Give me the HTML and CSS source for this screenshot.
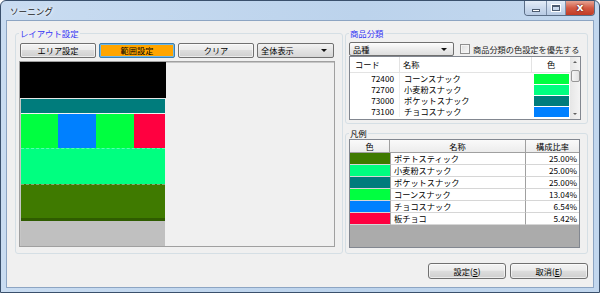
FILE: index.html
```html
<!DOCTYPE html>
<html lang="ja">
<head>
  <meta charset="UTF-8"/>
  <title>ソーニング</title>
  <link rel="stylesheet" href="styles.css">
</head>
<body>
  <div class="window">
    <div class="titlebar">
      <span class="title">ソーニング</span>
      <div class="caption">
        <span class="cap-btn cap-min"><i></i></span>
        <span class="cap-btn cap-max"><i></i></span>
        <span class="cap-btn cap-close">x</span>
      </div>
    </div>

    <div class="client">
      <div class="main">
        <fieldset class="group group-layout">
          <legend class="blue">レイアウト設定</legend>
          <div class="toolbar">
            <button class="btn">エリア設定</button>
            <button class="btn btn-active">範囲設定</button>
            <button class="btn">クリア</button>
            <div class="combo combo-view"><span>全体表示</span><i class="arrow"></i></div>
          </div>
          <div class="canvas">
            <div class="zones">
              <div class="zone z-black"></div>
              <div class="zone z-teal"></div>
              <div class="zone z-row">
                <div class="cell c-green w37"></div>
                <div class="cell c-blue w38"></div>
                <div class="cell c-green w38"></div>
                <div class="cell c-red w31"></div>
              </div>
              <div class="zone z-mint"></div>
              <div class="zone z-olive"></div>
              <div class="zone z-gray"></div>
            </div>
          </div>
        </fieldset>

        <div class="side">
          <fieldset class="group group-cat">
            <legend class="blue">商品分類</legend>
            <div class="cat-row">
              <div class="combo combo-cat"><span>品種</span><i class="arrow"></i></div>
              <label class="check"><i class="box"></i>商品分類の色設定を優先する</label>
            </div>
            <div class="list">
              <div class="list-grid">
                <div class="lh lh-code">コード</div>
                <div class="lh lh-name">名称</div>
                <div class="lh lh-color">色</div>

                <div class="lc code">72400</div><div class="lc name">コーンスナック</div><div class="lc sw"><i class="c-green"></i></div>
                <div class="lc code">72700</div><div class="lc name">小麦粉スナック</div><div class="lc sw"><i class="c-mint"></i></div>
                <div class="lc code">73000</div><div class="lc name">ポケットスナック</div><div class="lc sw"><i class="c-teal"></i></div>
                <div class="lc code">73100</div><div class="lc name">チョコスナック</div><div class="lc sw"><i class="c-blue"></i></div>
              </div>
              <div class="vscroll">
                <span class="sb-arrow up"></span>
                <span class="sb-thumb"></span>
                <span class="sb-arrow down"></span>
              </div>
            </div>
          </fieldset>

          <fieldset class="group group-legend">
            <legend>凡例</legend>
            <div class="legend-table">
              <div class="lg-grid">
                <div class="gh">色</div>
                <div class="gh">名称</div>
                <div class="gh">構成比率</div>

                <div class="gc c-olive"></div><div class="gc gname">ポテトスティック</div><div class="gc gpct">25.00%</div>
                <div class="gc c-mint"></div><div class="gc gname">小麦粉スナック</div><div class="gc gpct">25.00%</div>
                <div class="gc c-teal"></div><div class="gc gname">ポケットスナック</div><div class="gc gpct">25.00%</div>
                <div class="gc c-green"></div><div class="gc gname">コーンスナック</div><div class="gc gpct">13.04%</div>
                <div class="gc c-blue"></div><div class="gc gname">チョコスナック</div><div class="gc gpct">6.54%</div>
                <div class="gc c-red"></div><div class="gc gname">板チョコ</div><div class="gc gpct">5.42%</div>
              </div>
              <div class="lg-empty"></div>
            </div>
          </fieldset>
        </div>
      </div>

      <div class="footer">
        <button class="btn btn-dlg">設定(<u>S</u>)</button>
        <button class="btn btn-dlg">取消(<u>E</u>)</button>
      </div>
    </div>
  </div>
</body>
</html>
```

FILE: styles.css
```css
* { box-sizing:border-box; }
body { margin:0; font-family:"Noto Sans CJK JP","Noto Sans",sans-serif; font-size:8.2px; color:#000; background:#fff; }

/* window frame */
.window { width:600px; height:293px; display:flex; flex-direction:column; background:linear-gradient(90deg,#c9dcf1,#bcd3ec 60%,#c2d7ee); border:1px solid #3a506c; border-radius:6px 6px 0 0; padding:0 5px 4px; }
.titlebar { height:19px; flex:none; display:flex; justify-content:space-between; align-items:flex-start; }
.title { font-size:8.6px; line-height:20px; padding-left:4px; color:#1c1c1c; text-shadow:0 0 3px #fff,0 0 5px #fff; }
.caption { display:flex; border:1px solid #5a6d86; border-top:none; border-radius:0 0 4px 4px; overflow:hidden; margin-right:-1px; }
.cap-btn { height:14px; display:flex; align-items:center; justify-content:center; }
.cap-min, .cap-max { background:linear-gradient(#e4edf8,#cbdaed 50%,#b8cbe4); border-right:1px solid #7b8ea8; }
.cap-min { width:22px; }
.cap-max { width:19px; }
.cap-min i { width:8px; height:3px; background:#fff; border:1px solid #4c5b70; margin-top:5px; }
.cap-max i { width:8px; height:6px; background:transparent; border:1px solid #4c5b70; box-shadow:inset 0 1px 0 #4c5b70,0 0 0 1px #fff; }
.cap-close { width:28px; background:linear-gradient(#e7a493,#d35a43 50%,#c13b25); color:#fff; font:bold 11px/1 "DejaVu Sans",sans-serif; text-shadow:0 0 2px #5a1010,0 0 1px #5a1010; padding-bottom:2px; }

.client { flex:1; background:#f0f0f0; border:1px solid #8da5c3; padding:6px 5px 0 8px; display:flex; flex-direction:column; }
.main { display:flex; gap:2px; }

/* group boxes */
.group { margin:0; border:1px solid #d5dfe5; border-radius:3px; padding:0 3px; min-width:0; }
.group legend { padding:0 1px; line-height:12px; font-size:8.4px; margin-left:0; }
.blue { color:#3535f5; }
.group-layout { width:328px; height:227px; padding-left:4px; }
.group-layout legend { margin-left:-1px; }
.side { width:243px; display:flex; flex-direction:column; gap:3px; }
.group-cat { height:97px; }
.group-legend { height:127px; }

/* buttons */
.toolbar { display:flex; gap:3px; margin-top:4px; height:15px; }
.btn { width:76px; height:15px; padding:0; font-family:inherit; font-size:8.2px; line-height:13px; color:#000; border:1px solid #707070; border-radius:2px; background:linear-gradient(#f3f3f3 0,#ebebeb 45%,#dddddd 50%,#cfcfcf 100%); box-shadow:inset 0 0 0 1px rgba(255,255,255,.6); }
.btn-active { background:#ffa500; border-color:#3c7fb1; box-shadow:inset 0 0 0 1px #6fb7e8; }
.combo { position:relative; height:15px; border:1px solid #707070; border-radius:2px; background:linear-gradient(#f3f3f3,#e3e3e3 50%,#d6d6d6); line-height:13px; padding-left:3px; }
.combo-view { width:77px; }
.combo-cat { width:105px; height:14px; line-height:12px; background:linear-gradient(#fdfdfd,#ececec 50%,#dedede); }
.arrow { position:absolute; right:6px; top:5px; width:0; height:0; border-left:3px solid transparent; border-right:3px solid transparent; border-top:3px solid #111; }

/* layout canvas */
.canvas { margin:3px 0 0 -1px; width:316px; height:186px; background:#f0f0f0; border:1px solid #a0a0a0; box-shadow:inset 1px 1px 0 #c6c6c6; }
.zones { width:146px; display:flex; flex-direction:column; }
.zone { margin-left:1px; width:144px; }
.z-black { margin-left:0; width:146px; height:37px; background:#000; border-bottom:1px solid #e6e6e6; }
.z-teal { height:14px; background:#007c7c; }
.z-row { height:35px; display:flex; border-top:1px dashed rgba(255,255,255,.3); }
.cell { height:100%; }
.w37 { width:37px; } .w38 { width:38px; } .w31 { width:31px; }
.z-mint { height:36px; background:#00ff80; border-top:1px dashed rgba(255,255,255,.35); }
.z-olive { height:37px; background:#3f7a00; border-top:1px dashed rgba(190,190,190,.6); border-bottom:3px solid #2f5c00; }
.z-gray { height:25px; background:#c0c0c0; }

.c-green { background:#00ff40; }
.c-blue { background:#0080ff; }
.c-red { background:#ff0040; }
.c-mint { background:#00ff80; }
.c-teal { background:#007c7c; }
.c-olive { background:#3f7a00; }

/* category list */
.cat-row { display:flex; align-items:center; margin-top:3px; height:14px; }
.check { display:flex; align-items:center; margin-left:6px; color:#222; }
.box { width:10px; height:10px; border:1px solid #8f8f8f; background:linear-gradient(135deg,#dcdcdc,#f9f9f9); box-shadow:inset 0 0 0 1px #f4f4f4; margin-right:3px; }
.list { display:flex; width:232px; height:64px; border:1px solid #828790; background:#fff; }
.list-grid { flex:1; display:grid; grid-template-columns:50px 132px 38px; grid-template-rows:16px repeat(4,11px); align-content:start; overflow:hidden; }
.lh { border-bottom:1px solid #e3e3e3; border-right:1px solid #e3e3e3; line-height:15px; }
.lh-code { padding-left:5px; }
.lh-name { padding-left:3px; }
.lh-color { text-align:center; border-right:none; }
.lc { line-height:11px; white-space:nowrap; }
.code { text-align:right; padding-right:5px; border-right:1px solid #eeeeee; }
.name { padding-left:4px; }
.sw { padding:1px 1px 0 2px; }
.sw i { display:block; height:10px; }
.vscroll { width:10px; display:flex; flex-direction:column; background:linear-gradient(90deg,#e6e6e6,#f4f4f4); }
.sb-arrow { height:10px; position:relative; }
.sb-arrow::after { content:""; position:absolute; left:3px; border-left:2px solid transparent; border-right:2px solid transparent; }
.up::after { top:4px; border-bottom:2px solid #606060; }
.down { margin-top:auto; }
.down::after { top:4px; border-top:2px solid #606060; }
.sb-thumb { height:12px; margin:3px 0 0 1px; width:9px; border:1px solid #979797; border-radius:2px; background:linear-gradient(90deg,#f4f4f4,#e1e1e1); }

/* legend table */
.legend-table { width:231px; height:109px; border:1px solid #828790; display:flex; flex-direction:column; background:#fff; }
.lg-grid { display:grid; grid-template-columns:40px 136px 53px; grid-template-rows:13px repeat(6,12px); }
.gh { background:linear-gradient(#fafafa,#ececec); border-right:1px solid #a0a0a0; border-bottom:1px solid #a0a0a0; text-align:center; line-height:12px; }
.gh:nth-child(3) { border-right:none; }
.gc { border-bottom:1px solid #d6d6d6; line-height:11px; white-space:nowrap; }
.gname { padding-left:3px; border-left:1px solid #a0a0a0; border-right:1px solid #a0a0a0; }
.gpct { text-align:right; padding-right:2px; }
.lg-empty { flex:1; background:#ababab; }

/* dialog buttons */
.footer { display:flex; justify-content:flex-end; gap:4px; margin-top:9px; }
.btn-dlg { width:78px; height:16px; border-radius:3px; }
```
